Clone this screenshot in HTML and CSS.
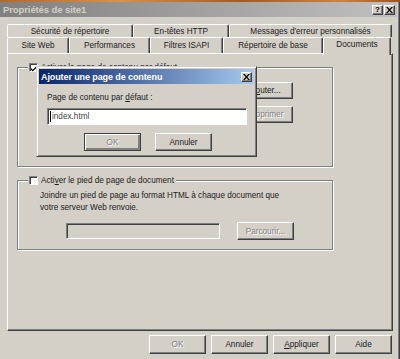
FILE: index.html
```html
<!DOCTYPE html>
<html lang="fr">
<head>
<meta charset="utf-8">
<link rel="stylesheet" href="styles.css">
</head>
<body>
<div class="desk"></div>
<div class="win">
  <div class="titlebar">
    <span class="title">Propriétés de site1</span>
    <span class="tbtns"><span class="tbtn">?</span><span class="tbtn x">
      <svg width="7" height="6" viewBox="0 0 7 6"><path d="M0 0h1.5l2 2 2-2H7L4.3 3 7 6H5.5l-2-2-2 2H0l2.7-3z" fill="#000"/></svg></span></span>
  </div>
  <div class="body">
    <div class="tabrow back">
      <div class="tab t1">Sécurité de répertoire</div>
      <div class="tab t2">En-têtes HTTP</div>
      <div class="tab t3">Messages d'erreur personnalisés</div>
    </div>
    <div class="tabrow front">
      <div class="tab f1">Site Web</div>
      <div class="tab f2">Performances</div>
      <div class="tab f3">Filtres ISAPI</div>
      <div class="tab f4">Répertoire de base</div>
      <div class="tab f5 sel">Documents</div>
    </div>
    <div class="panel">
      <div class="group g1">
        <div class="legend">
          <span class="check"><svg width="7" height="7" viewBox="0 0 7 7"><path d="M0 3l2 2 5-5v2L2 7 0 5z" fill="#000"/></svg></span>
          <span>Activer la page de contenu par défaut</span>
        </div>
        <div class="g1body">
          <div class="sidebtns">
            <div class="btn w57"><span>Aj<u>o</u>uter...</span></div>
            <div class="btn w57 dis">Supprimer</div>
          </div>
          <div class="movebtns">
            <div class="btn w57"></div>
            <div class="btn w57"></div>
          </div>
        </div>
      </div>
      <div class="group g2">
        <div class="legend">
          <span class="check"></span>
          <span>Acti<u>v</u>er le pied de page de document</span>
        </div>
        <p class="desc">Joindre un pied de page au format HTML à chaque document que<br>votre serveur Web renvoie.</p>
        <div class="fileRow">
          <div class="field dis"></div>
          <div class="btn w57 dis">Parcourir...</div>
        </div>
      </div>
    </div>
    <div class="footer">
      <div class="btn fb dis">OK</div>
      <div class="btn fb">Annuler</div>
      <div class="btn fb"><span><u>A</u>ppliquer</span></div>
      <div class="btn fb">Aide</div>
    </div>
  </div>
</div>

<div class="dialog">
  <div class="dtitle">
    <span class="title">Ajouter une page de contenu</span>
    <span class="tbtn x"><svg width="7" height="6" viewBox="0 0 7 6"><path d="M0 0h1.5l2 2 2-2H7L4.3 3 7 6H5.5l-2-2-2 2H0l2.7-3z" fill="#000"/></svg></span>
  </div>
  <div class="dbody">
    <label class="dlabel">Page de contenu par <u>d</u>éfaut :</label>
    <div class="field input"><span class="caret"></span>index.html</div>
    <div class="dbtns">
      <div class="btn w57 dis def">OK</div>
      <div class="btn w57">Annuler</div>
    </div>
  </div>
</div>
</body>
</html>
```
FILE: styles.css
```css
* { box-sizing: border-box; }
html, body { margin: 0; padding: 0; }
body {
  width: 400px;
  height: 359px;
  overflow: hidden;
  background: #d4d0c8;
  font-family: "Liberation Sans", Arial, sans-serif;
  font-size: 8.2px;
  color: #1a1a1a;
  position: relative;
}
u { text-decoration: underline; text-underline-offset: 1px; }

.desk {
  height: 2px;
  background: linear-gradient(90deg, #b06a2a, #d8924a 30%, #a55a20 60%, #c9843e 85%, #9a5220);
}

.win {
  height: 357px;
  border-right: 1px solid #404040;
  box-shadow: inset -1px 0 #808080;
}

.titlebar {
  height: 15px;
  margin-right: 2px;
  display: flex;
  align-items: center;
  justify-content: space-between;
  padding: 0 2px 0 3px;
  background: linear-gradient(90deg, #808080, #c0c0c0);
}
.title {
  font-weight: bold;
  font-size: 9.5px;
  color: #d4d0c8;
  letter-spacing: -0.1px;
}
.tbtns { display: flex; gap: 1px; }
.tbtn {
  width: 11px;
  height: 10px;
  display: flex;
  align-items: center;
  justify-content: center;
  background: #d4d0c8;
  border: 1px solid;
  border-color: #fff #404040 #404040 #fff;
  box-shadow: inset -1px -1px #808080;
  font-weight: bold;
  font-size: 8px;
  line-height: 1;
  color: #000;
}

.body {
  padding: 7px 6px 0 7px;
}

.tabrow { display: flex; }
.tab {
  display: flex;
  align-items: center;
  justify-content: center;
  background: #d4d0c8;
  border-top: 1px solid #fff;
  border-left: 1px solid #fff;
  border-right: 1px solid #404040;
  box-shadow: inset -1px 0 #808080;
  border-radius: 2px 2px 0 0;
  white-space: nowrap;
}
.back .tab { height: 13px; }
.front { height: 16px; align-items: flex-end; }
.front .tab { height: 16px; }
.t1 { width: 126px; }
.t2 { width: 96px; }
.t3 { width: 163px; }
.f1 { width: 62px; }
.f2 { width: 81px; }
.f3 { width: 73px; }
.f4 { width: 100px; }
.f5 { width: 68px; }
.tab.sel {
  height: 18px;
  margin-bottom: -2px;
  position: relative;
  z-index: 2;
  align-items: flex-start;
  padding-top: 2px;
}

.panel {
  height: 278px;
  width: 386px;
  border: 1px solid;
  border-color: #fff #404040 #404040 #fff;
  box-shadow: inset -1px -1px #808080;
  padding: 13px 0 0 9px;
  position: relative;
  z-index: 1;
}

.group {
  width: 316px;
  border: 1px solid #808080;
  box-shadow: inset 1px 1px #fff, 1px 1px #fff;
  position: relative;
}
.g1 { height: 100px; }
.g2 { height: 70px; margin-top: 13px; }

.legend {
  display: flex;
  align-items: center;
  gap: 3px;
  margin: -6px 0 0 10px;
  padding: 0 2px 0 1px;
  width: max-content;
  background: #d4d0c8;
  height: 11px;
}
.check {
  width: 9px;
  height: 9px;
  background: #fff;
  border: 1px solid;
  border-color: #808080 #fff #fff #808080;
  box-shadow: inset 1px 1px #404040;
  display: flex;
  align-items: center;
  justify-content: center;
}
.check svg { margin: 1px 0 0 1px; }

.btn {
  display: flex;
  align-items: center;
  justify-content: center;
  height: 18px;
  background: #d4d0c8;
  border: 1px solid;
  border-color: #fff #404040 #404040 #fff;
  box-shadow: inset -1px -1px #808080;
  white-space: nowrap;
}
.btn.dis { color: #808080; text-shadow: 1px 1px #fff; }
.btn.def { border-color: #404040; box-shadow: inset 1px 1px #fff, inset -2px -2px #808080; }
.w57 { width: 57px; }

.g1body { position: relative; height: 88px; }
.sidebtns {
  display: flex;
  flex-direction: column;
  gap: 7px;
  width: max-content;
  margin: 9px 0 0 218px;
}
.sidebtns .btn { height: 17px; }
.movebtns {
  display: flex;
  gap: 7px;
  margin: 11px 0 0 91px;
}

.desc {
  margin: 4px 0 0 22px;
  line-height: 12px;
}
.fileRow {
  display: flex;
  align-items: center;
  gap: 17px;
  margin: 8px 0 0 48px;
}
.field {
  width: 154px;
  height: 16px;
  background: #d4d0c8;
  border: 1px solid;
  border-color: #808080 #fff #fff #808080;
  box-shadow: inset 1px 1px #404040;
}

.footer {
  display: flex;
  justify-content: flex-end;
  gap: 5px;
  padding: 4px 1px 0 0;
}
.btn.fb { width: 57px; height: 19px; }

.dialog {
  position: absolute;
  left: 36px;
  top: 66px;
  width: 221px;
  height: 91px;
  background: #d4d0c8;
  border: 1px solid;
  border-color: #d4d0c8 #404040 #404040 #d4d0c8;
  box-shadow: inset 1px 1px #fff, inset -1px -1px #808080;
  padding: 2px;
  z-index: 5;
}
.dtitle {
  height: 15px;
  display: flex;
  align-items: center;
  justify-content: space-between;
  padding: 0 2px 0 2px;
  background: linear-gradient(90deg, #0a246a, #a6caf0);
}
.dtitle .title { color: #fff; font-size: 9px; }
.dbody { padding: 8px 0 0 8px; }
.dlabel { display: block; line-height: 11px; }
.input {
  width: 200px;
  height: 17px;
  margin-top: 5px;
  background: #fff;
  display: flex;
  align-items: center;
  padding-left: 2px;
  color: #444;
}
.caret { width: 1px; height: 11px; background: #000; margin-right: 1px; }
.dbtns {
  display: flex;
  gap: 14px;
  margin: 8px 0 0 37px;
}
```
